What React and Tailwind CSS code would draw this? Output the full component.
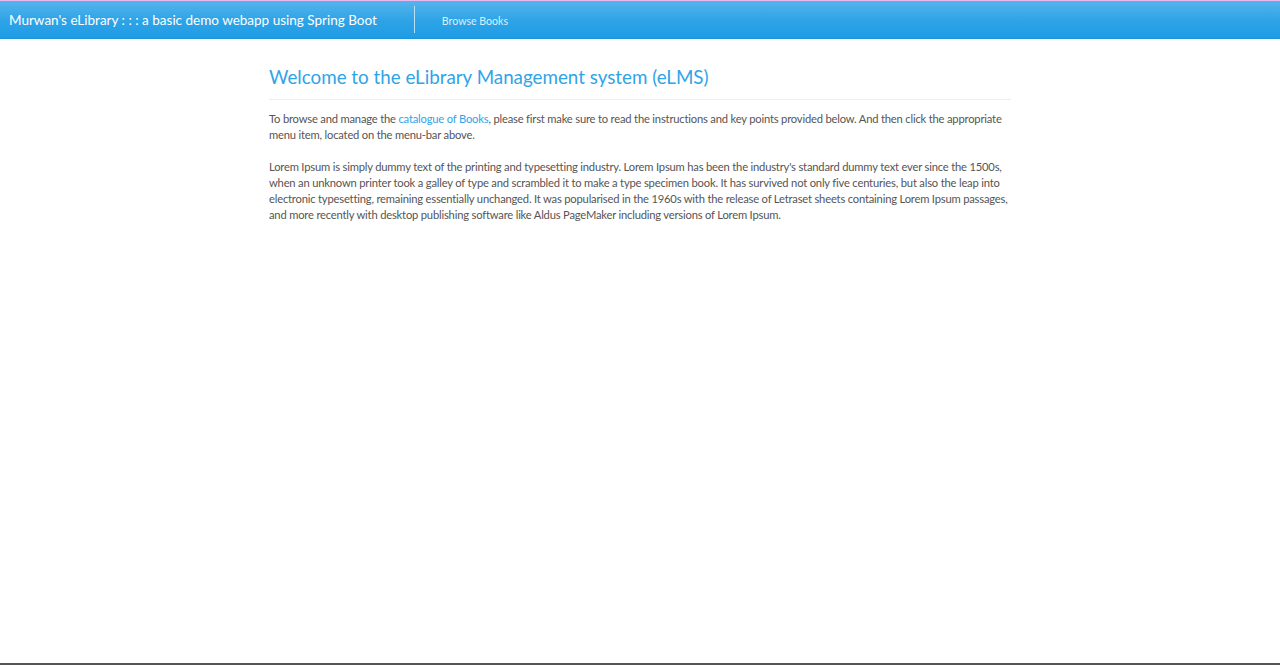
export default function App() {
  return (
    <div
      className="h-[665px] flex flex-col bg-white text-[#555555]"
      style={{ fontFamily: "'Segoe UI', Lato, 'Open Sans', sans-serif" }}
    >
      <div className="h-px bg-[#e9b8f3]" />
      <nav className="h-[38px] flex items-center pt-[3px] bg-gradient-to-b from-[#54b4eb] via-[#2fa4e7] to-[#1d9ce5] border-b border-[#1c93d8]">
        <a className="pl-[9px] pr-[37px] text-[13.5px] text-white leading-none whitespace-nowrap">
          Murwan's eLibrary : : : a basic demo webapp using Spring Boot
        </a>
        <div className="w-px h-[27px] -mt-[3px] bg-[#b9e0f7]" />
        <a className="ml-[27px] text-[10.6px] text-[#dcefFb] leading-none whitespace-nowrap">Browse Books</a>
      </nav>
      <main className="flex-1">
        <div className="w-[742px] mx-auto pt-[26px]">
          <h2 className="text-[18.8px] leading-[24px] text-[#2fa4e7] pb-[10px] border-b border-[#eeeeee]">
            Welcome to the eLibrary Management system (eLMS)
          </h2>
          <div className="pt-[11px] text-[11.2px] leading-[16px] tracking-[-0.19px] whitespace-nowrap">
            <p>
              To browse and manage the <a className="text-[#2fa4e7]">catalogue of Books</a>, please first make sure
              to read the instructions and key points provided below. And then click the appropriate
              <br />
              menu item, located on the menu-bar above.
            </p>
            <p className="mt-[16px]">
              Lorem Ipsum is simply dummy text of the printing and typesetting industry. Lorem Ipsum has been the
              industry's standard dummy text ever since the 1500s,
              <br />
              when an unknown printer took a galley of type and scrambled it to make a type specimen book. It has
              survived not only five centuries, but also the leap into
              <br />
              electronic typesetting, remaining essentially unchanged. It was popularised in the 1960s with the
              release of Letraset sheets containing Lorem Ipsum passages,
              <br />
              and more recently with desktop publishing software like Aldus PageMaker including versions of Lorem
              Ipsum.
            </p>
          </div>
        </div>
      </main>
      <div className="h-[2px] bg-[#555555]" />
    </div>
  );
}
